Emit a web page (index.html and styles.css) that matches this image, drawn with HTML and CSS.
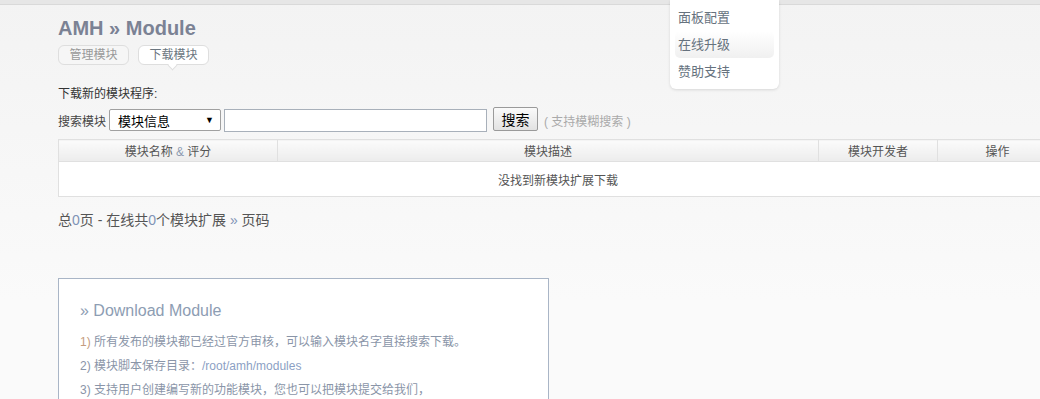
FILE: index.html
```html
<!DOCTYPE html>
<html lang="zh-CN">
<head>
    <meta charset="UTF-8">
    <title>AMH » Module</title>
    <link rel="stylesheet" href="styles.css">
</head>
<body>

    <div class="topbar"></div>

    <!-- 顶部下拉菜单 -->
    <ul class="dropdown">
        <li><a href="#">面板配置</a></li>
        <li class="hover"><a href="#">在线升级</a></li>
        <li><a href="#">赞助支持</a></li>
    </ul>

    <div class="main">
        <h1>AMH » Module</h1>

        <div class="tabs">
            <a href="#" class="tab">管理模块</a>
            <a href="#" class="tab active">下载模块</a>
        </div>

        <p class="intro">下载新的模块程序:</p>

        <form class="search">
            <span class="label">搜索模块</span>
            <div class="select">
                <span>模块信息</span>
                <i>&#9660;</i>
            </div>
            <input type="text" class="keyword">
            <button type="button">搜索</button>
            <span class="tip">( 支持模糊搜索 )</span>
        </form>

        <table class="list">
            <thead>
                <tr>
                    <th class="c1">模块名称 <em>&amp;</em> 评分</th>
                    <th class="c2">模块描述</th>
                    <th class="c3">模块开发者</th>
                    <th class="c4">操作</th>
                </tr>
            </thead>
            <tbody>
                <tr>
                    <td colspan="4">没找到新模块扩展下载</td>
                </tr>
            </tbody>
        </table>

        <div class="pager">总<b>0</b>页 - 在线共<b>0</b>个模块扩展 <i>»</i> 页码</div>

        <div class="notice">
            <h2>» Download Module</h2>
            <p><span class="num">1)</span> 所有发布的模块都已经过官方审核，可以输入模块名字直接搜索下载。</p>
            <p>2) 模块脚本保存目录：<span class="path">/root/amh/modules</span></p>
            <p>3) 支持用户创建编写新的功能模块，您也可以把模块提交给我们，</p>
        </div>
    </div>

</body>
</html>
```

FILE: styles.css
```css
/* Page */
body {
    margin: 0;
    padding: 0;
    font-family: "Liberation Sans", Arial, "Noto Sans CJK SC", sans-serif;
    font-size: 12px;
    color: #555;
    background: linear-gradient(#f3f3f3, #fafafa 300px);
    min-height: 399px;
    overflow: hidden;
}

.topbar {
    height: 4px;
    background-color: #e6e6e6;
    border-bottom: 1px solid #d9d9d9;
}

/* Dropdown menu */
.dropdown {
    position: absolute;
    top: 0;
    left: 670px;
    width: 109px;
    height: 89px;
    margin: 0;
    padding: 4px 0 0;
    box-sizing: border-box;
    list-style: none;
    background-color: #fff;
    border-radius: 0 0 6px 6px;
    box-shadow: 0 1px 3px rgba(0, 0, 0, 0.12);
}

.dropdown li {
    margin: 0 5px;
    height: 27px;
    line-height: 27px;
    border-radius: 5px;
}

.dropdown li a {
    display: block;
    padding-left: 3px;
    color: #66727e;
    text-decoration: none;
    font-size: 13px;
}

.dropdown li.hover {
    background: linear-gradient(#ffffff, #f0f0f0);
}

/* Main content */
.main {
    padding-left: 58px;
}

h1 {
    margin: 0;
    padding-top: 9px;
    height: 28px;
    line-height: 28px;
    font-size: 20px;
    font-weight: bold;
    color: #7b8294;
}

.tabs {
    display: flex;
    gap: 9px;
    margin-top: 3px;
    height: 20px;
}

.tab {
    position: relative;
    width: 69px;
    height: 18px;
    line-height: 18px;
    text-align: center;
    border: 1px solid #dedede;
    border-radius: 6px;
    background-color: #f6f6f6;
    color: #999;
    text-decoration: none;
    font-size: 12px;
}

.tab.active {
    background-color: #fff;
    color: #6b7680;
}

.tab.active:after {
    content: "";
    position: absolute;
    left: 30px;
    bottom: -5px;
    width: 6px;
    height: 6px;
    background-color: #fff;
    border-right: 1px solid #dedede;
    border-bottom: 1px solid #dedede;
    transform: rotate(45deg);
}

.intro {
    margin: 21px 0 0;
    line-height: 16px;
    color: #333;
}

/* Search */
.search {
    display: flex;
    align-items: center;
    margin-top: 5px;
    height: 26px;
}

.search .label {
    color: #444;
    margin-right: 3px;
}

.select {
    display: flex;
    justify-content: space-between;
    align-items: center;
    width: 96px;
    height: 20px;
    padding: 0 6px 0 8px;
    border: 1px solid #a0a0a0;
    border-radius: 2px;
    background-color: #fff;
    color: #000;
    font-size: 13px;
}

.select i {
    font-style: normal;
    font-size: 9px;
}

.keyword {
    width: 259px;
    height: 19px;
    margin: 0 0 0 3px;
    padding: 1px;
    border: 1px solid #a8b0ba;
    background-color: #fff;
}

.search button {
    width: 45px;
    height: 24px;
    margin: -2px 0 0 6px;
    padding: 0;
    border: 1px solid #9a9a9a;
    border-radius: 2px;
    background: linear-gradient(#fafafa, #e2e2e2);
    color: #000;
    font-family: inherit;
    font-size: 14px;
}

.search .tip {
    margin-left: 6px;
    color: #aaa;
}

/* Table */
.list {
    margin-top: 6px;
    width: 1000px;
    border-collapse: collapse;
    background-color: #fff;
}

.list th {
    height: 21px;
    font-weight: normal;
    color: #555;
    border: 1px solid #e0e0e0;
    background: linear-gradient(#fbfbfb, #ececec);
    padding: 0;
}

.list th em {
    font-style: normal;
    color: #8b9ab0;
}

.list .c1 { width: 218px; }
.list .c2 { width: 540px; }
.list .c3 { width: 118px; }

.list td {
    height: 34px;
    text-align: center;
    color: #555;
    border: 1px solid #e0e0e0;
    padding: 0;
}

.pager {
    margin-top: 13px;
    font-size: 14px;
    line-height: 20px;
    color: #555;
}

.pager b {
    font-weight: normal;
    color: #7f93b6;
}

.pager i {
    font-style: normal;
    color: #7f93b6;
}

/* Notice box */
.notice {
    margin-top: 48px;
    width: 458px;
    height: 140px;
    padding: 0 10px 0 21px;
    border: 1px solid #a9b5c6;
    background-color: #fff;
}

.notice h2 {
    margin: 0;
    padding-top: 22px;
    font-size: 16px;
    font-weight: normal;
    line-height: 20px;
    color: #8d9db3;
}

.notice p {
    margin: 0;
    height: 24px;
    line-height: 24px;
    color: #8a95a8;
}

.notice h2 + p {
    margin-top: 9px;
}

.notice .num {
    color: #c49c7e;
}

.notice .path {
    color: #8c9fc4;
}
```
